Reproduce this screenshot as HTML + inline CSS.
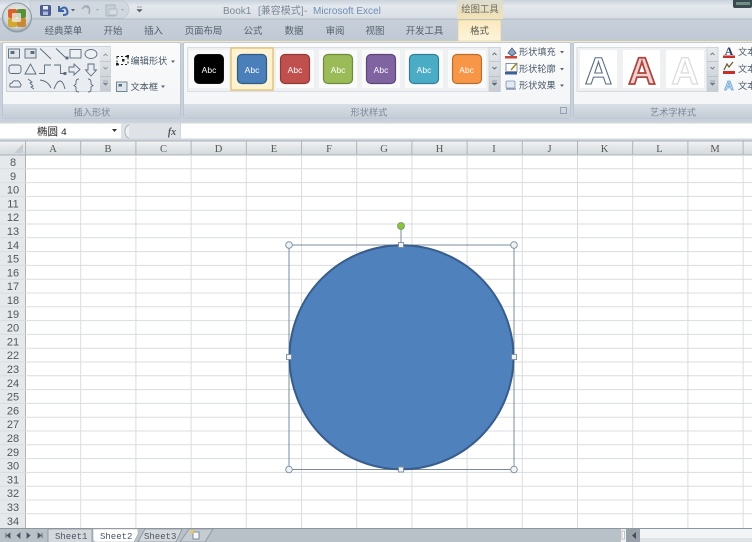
<!DOCTYPE html>
<html><head><meta charset="utf-8">
<style>
html,body{margin:0;padding:0;background:#fff;width:752px;height:542px;overflow:hidden}
svg{display:block;filter:blur(.3px)}
text{font-family:"Liberation Sans","Noto Sans CJK SC",sans-serif;font-size:9.2px;fill:#4a5868}
.m{font-family:"Liberation Mono","Noto Sans CJK SC",monospace}
.h{font-family:"Liberation Serif",serif;font-size:10.5px;fill:#555;text-anchor:middle}
.r{font-family:"Liberation Sans",sans-serif;font-size:11px;fill:#555;text-anchor:middle}
.t{font-size:9.4px;fill:#55606e;text-anchor:middle}
.g{font-size:9.2px;fill:#7b8796;text-anchor:middle}
.b{font-size:8.5px;fill:#fff;text-anchor:middle}
.i{fill:none;stroke:#5b6a7c;stroke-width:.9}
</style></head><body>
<svg width="752" height="542" viewBox="0 0 752 542" xmlns="http://www.w3.org/2000/svg">
<defs>
<linearGradient id="tb" x1="0" y1="0" x2="0" y2="1"><stop offset="0" stop-color="#c9d1da"/><stop offset=".3" stop-color="#e4e8ed"/><stop offset="1" stop-color="#d8dee5"/></linearGradient>
<linearGradient id="tr" x1="0" y1="0" x2="0" y2="1"><stop offset="0" stop-color="#c8d0da"/><stop offset="1" stop-color="#bfc9d4"/></linearGradient>
<linearGradient id="rb" x1="0" y1="0" x2="0" y2="1"><stop offset="0" stop-color="#fbfbfb"/><stop offset="1" stop-color="#f2f4f6"/></linearGradient>
<linearGradient id="ft" x1="0" y1="0" x2="0" y2="1"><stop offset="0" stop-color="#d9dfe6"/><stop offset="1" stop-color="#c4ccd6"/></linearGradient>
<linearGradient id="ct" x1="0" y1="0" x2="0" y2="1"><stop offset="0" stop-color="#dcdcd0"/><stop offset="1" stop-color="#f2e3b4"/></linearGradient>
<linearGradient id="at" x1="0" y1="0" x2="0" y2="1"><stop offset="0" stop-color="#fbe9bd"/><stop offset="1" stop-color="#fdf4dc"/></linearGradient>
<linearGradient id="hd" x1="0" y1="0" x2="0" y2="1"><stop offset="0" stop-color="#f1f3f4"/><stop offset="1" stop-color="#d3d8dc"/></linearGradient>
<linearGradient id="sc" x1="0" y1="0" x2="0" y2="1"><stop offset="0" stop-color="#e8ebee"/><stop offset="1" stop-color="#c6ccd2"/></linearGradient>
<radialGradient id="ob" cx=".5" cy=".4" r=".6"><stop offset="0" stop-color="#f4f2ea"/><stop offset=".75" stop-color="#cfd5d8"/><stop offset="1" stop-color="#8d9aa5"/></radialGradient>
</defs>

<!-- title bar -->
<rect width="752" height="19" fill="url(#tb)"/>
<rect y="19" width="752" height="22" fill="url(#tr)"/>
<rect y="18.5" width="752" height="1" fill="#aeb9c5"/>
<path d="M30 1H124Q134 9 124 18H30Z" fill="#d1d8e0" stroke="#bcc5cf" stroke-width=".7"/>
<rect x="733" y="-3" width="19" height="11" rx="2" fill="#3a4a50"/><rect x="736" y="2" width="14" height="3" fill="#6f8f80"/>

<!-- office button -->
<circle cx="17" cy="17.500" r="14.500" fill="url(#ob)" stroke="#8b97a2"/>
<rect x="8" y="9" width="9" height="9" rx="2" fill="#d8622c"/><rect x="17" y="9" width="9" height="9" rx="2" fill="#5b8f3a"/>
<rect x="8" y="18" width="9" height="9" rx="2" fill="#d2a92e"/><rect x="17" y="18" width="9" height="9" rx="2" fill="#c98a35"/>
<rect x="12" y="13" width="9" height="9" rx="1" fill="#eef0ee" opacity=".75"/>

<!-- QAT -->
<rect x="40.500" y="5.500" width="10" height="10" rx="1" fill="#4c5f9a" stroke="#38487a" stroke-width=".8"/><rect x="43" y="6" width="5" height="3.500" fill="#e9edf5"/><rect x="43" y="11.500" width="5" height="3.500" fill="#aeb9d6"/>
<path d="M59 6V11H64" fill="none" stroke="#3e63a8" stroke-width="2"/><path d="M60 10Q65 5 67 10T63 15" fill="none" stroke="#3e63a8" stroke-width="2"/>
<path d="M71 9h4l-2 2.500z" fill="#53606e"/>
<path d="M85 6Q91 5 89 14M82 9l3-3 3 2" fill="none" stroke="#a2adb9" stroke-width="1.600"/>
<path d="M96 9h3l-1.500 2z" fill="#a4aeb9"/>
<rect x="106" y="5" width="9" height="11" fill="#c7cfd7" stroke="#a5afba" stroke-width=".8"/><path d="M109 9h8v6h-8z" fill="#d7dce1" stroke="#aab3bd" stroke-width=".7"/>
<path d="M121 9h3l-1.500 2z" fill="#a4aeb9"/>
<path d="M137 7h5M137 9.500h5l-2.500 2.500z" fill="#55606e" stroke="#55606e" stroke-width=".6"/>

<text x="223" y="14" style="font-size:10px;fill:#7b8896">Book1<tspan x="258">[兼容模式]</tspan><tspan x="304">-</tspan><tspan x="313" fill="#6f8fb5">Microsoft Excel</tspan></text>

<!-- tabs -->
<path d="M457 0H503V19H457Z" fill="url(#ct)"/>
<text x="480" y="12.500" class="t" style="fill:#6b6b5e">绘图工具</text>
<path d="M458 41V22Q458 20 460 20H499Q501 20 501 22V41Z" fill="url(#at)" stroke="#d9cfa8" stroke-width=".7"/>
<text x="63.500" y="34" class="t">经典菜单</text><text x="113" y="34" class="t">开始</text><text x="153.500" y="34" class="t">插入</text><text x="203.500" y="34" class="t">页面布局</text><text x="253" y="34" class="t">公式</text><text x="294" y="34" class="t">数据</text><text x="335" y="34" class="t">审阅</text><text x="375" y="34" class="t">视图</text><text x="424.500" y="34" class="t">开发工具</text><text x="479.500" y="34" class="t" style="fill:#5a5a50">格式</text>

<!-- ribbon -->
<rect y="41" width="752" height="82" fill="#c9d2dc"/>
<rect y="41" width="752" height="1.500" fill="#f3e7c6"/>
<g stroke="#b4bfca" stroke-width=".8">
<rect x="2.500" y="42.500" width="178" height="76" rx="2" fill="url(#rb)"/>
<rect x="183.500" y="42.500" width="387" height="76" rx="2" fill="url(#rb)"/>
<rect x="573.500" y="42.500" width="180" height="76" rx="2" fill="url(#rb)"/>
</g>
<path d="M3 104H180V116Q180 118 178 118H5Q3 118 3 116Z" fill="url(#ft)"/>
<path d="M184 104H570V116Q570 118 568 118H186Q184 118 184 116Z" fill="url(#ft)"/>
<path d="M574 104H752V118H576Q574 118 574 116Z" fill="url(#ft)"/>
<text x="92" y="115.500" class="g">插入形状</text>
<text x="369" y="115.500" class="g">形状样式</text>
<text x="673" y="115.500" class="g">艺术字样式</text>
<rect x="560.500" y="107.500" width="6" height="6" fill="none" stroke="#8a96a3" stroke-width=".8"/>

<!-- shapes gallery -->
<rect x="6.500" y="46.500" width="104" height="45" fill="#e9edf1" stroke="#c2cad3" stroke-width=".8"/>
<rect x="100" y="47" width="10.500" height="44" fill="url(#sc)"/>
<path d="M100 61.500h10.500M100 76.500h10.500" stroke="#b5bec8" stroke-width=".7"/>
<path d="M103.500 56l2-2 2 2M103.500 67l2 2 2-2" fill="none" stroke="#7d8895" stroke-width=".8"/><path d="M103 81h5M103 83h5l-2.500 2.500z" fill="#7d8895" stroke="#7d8895" stroke-width=".5"/>
<g class="i">
<rect x="8.500" y="49" width="11" height="9" fill="#dfe4ea"/><path d="M11 51.500h3v2h-3z" fill="#5b6a7c"/>
<rect x="25" y="49" width="11" height="9" fill="#dfe4ea"/><path d="M31 51.500h3v2h-3z" fill="#5b6a7c"/>
<path d="M40 48.500L51 59M56 48.500L66 58"/><rect x="66" y="57" width="2" height="2" fill="#5b6a7c"/>
<rect x="70" y="49.500" width="11" height="8.500" fill="#eef1f4"/><ellipse cx="91" cy="54" rx="6" ry="4.500" fill="#eef1f4"/>
<rect x="9" y="65" width="12" height="8.500" rx="2.500"/><path d="M25 74L30.500 64 36 74Z"/>
<path d="M39 73.500h5.500V65H51M54 65h6.500V73.500H65"/><rect x="64" y="72.500" width="2" height="2" fill="#5b6a7c"/>
<path d="M69 67h5v-3l6 5.500-6 5.500v-3h-5z"/><path d="M88 64h6v6h2.500l-5.500 6-5.500-6H88z"/>
<path d="M10 87q-1-4 2-4 1-3 4-2 3-1 4 2 2 2 0 4z"/><path d="M28 79l4 3-2 1 3 3-2 1 3 2"/>
<path d="M40 80q8 1 11 8M54 89q3-8 6-8t5 8M79 79q-3 0-3 3v2l-2 1.500 2 1.500v3q0 2 3 2M88 79q3 0 3 3v2l2 1.500-2 1.500v3q0 2-3 2"/>
</g>
<!-- edit shape -->
<rect x="117" y="56.500" width="11" height="8" fill="none" stroke="#222" stroke-width="1" stroke-dasharray="2 2"/>
<rect x="116" y="63" width="2.500" height="2.500" fill="#222"/><rect x="126.500" y="55" width="2.500" height="2.500" fill="#222"/><rect x="122" y="59" width="2.500" height="2.500" fill="#222"/>
<text x="130.500" y="64">编辑形状</text><path d="M171 60.500h4l-2 2.500z" fill="#5b6673"/>
<rect x="116.500" y="82" width="10.500" height="9.500" fill="#dfe5ec" stroke="#6a7888" stroke-width=".9"/><path d="M118.500 84h3.500v2.500h-3.500z" fill="#5b6a7c"/>
<text x="130.500" y="90">文本框</text><path d="M161 85.500h4l-2 2.500z" fill="#5b6673"/>

<!-- shape styles -->
<rect x="187.500" y="47.500" width="313" height="44" fill="#eef0f2" stroke="#d4d9df" stroke-width=".8"/>
<g fill="#fafafa"><rect x="189" y="50" width="40" height="38"/><rect x="276" y="50" width="38" height="38"/><rect x="319" y="50" width="38" height="38"/><rect x="362" y="50" width="38" height="38"/><rect x="405" y="50" width="38" height="38"/><rect x="448" y="50" width="38" height="38"/></g>
<rect x="231" y="48" width="42" height="42" fill="#fdf3d2" stroke="#e2bd6b" stroke-width="1.300"/>
<rect x="194.500" y="54.500" width="29" height="29" rx="4.500" fill="#000" stroke="#111"/>
<rect x="237.500" y="54.500" width="29" height="29" rx="4.500" fill="#4b7fba" stroke="#2f5a86" stroke-width="1.200"/>
<rect x="280.500" y="54.500" width="29" height="29" rx="4.500" fill="#c0504d" stroke="#8f3a38" stroke-width="1.200"/>
<rect x="323.500" y="54.500" width="29" height="29" rx="4.500" fill="#9bbb59" stroke="#6f8a3d" stroke-width="1.200"/>
<rect x="366.500" y="54.500" width="29" height="29" rx="4.500" fill="#8064a2" stroke="#5c4678" stroke-width="1.200"/>
<rect x="409.500" y="54.500" width="29" height="29" rx="4.500" fill="#4bacc6" stroke="#317f94" stroke-width="1.200"/>
<rect x="452.500" y="54.500" width="29" height="29" rx="4.500" fill="#f79646" stroke="#b86e30" stroke-width="1.200"/>
<text x="209" y="73" class="b">Abc</text><text x="252" y="73" class="b">Abc</text><text x="295" y="73" class="b">Abc</text><text x="338" y="73" class="b">Abc</text><text x="381" y="73" class="b">Abc</text><text x="424" y="73" class="b">Abc</text><text x="466.500" y="73" class="b">Abc</text>
<rect x="489" y="47.500" width="11" height="44" fill="url(#sc)" stroke="#c2cad3" stroke-width=".6"/>
<path d="M489 61.500h11M489 76.500h11" stroke="#b5bec8" stroke-width=".7"/>
<path d="M492.500 55l2-2 2 2M492.500 67l2 2 2-2" fill="none" stroke="#5d6875" stroke-width=".9"/><path d="M492 81h5M492 83h5l-2.500 2.500z" fill="#5d6875" stroke="#5d6875" stroke-width=".5"/>

<path d="M508 53l4-5 4 5-4 3z" fill="#8ea4bd" stroke="#3f5a7c" stroke-width=".8"/><rect x="505" y="56" width="12" height="2.500" fill="#c9453e"/>
<rect x="506" y="63.500" width="11" height="8" fill="#fff" stroke="#6b7a8a" stroke-width=".8"/><path d="M511 70l6-7" stroke="#9a8b2f" stroke-width="1.600"/><rect x="505" y="72" width="12" height="2.500" fill="#3f5f9c"/>
<rect x="506" y="81" width="9" height="7" rx="1" fill="#e4e9ef" stroke="#7d93ad" stroke-width=".8"/><path d="M506 89h10" stroke="#7d93ad" stroke-width="1.400"/>
<text x="519" y="55">形状填充</text><text x="519" y="72">形状轮廓</text><text x="519" y="88.500">形状效果</text>
<path d="M560 51h4l-2 2.500zM560 68h4l-2 2.500zM560 84.500h4l-2 2.500z" fill="#5b6673"/>

<!-- wordart -->
<rect x="577" y="47.500" width="141" height="44" fill="#eef0f2" stroke="#cfd5db" stroke-width=".8"/>
<g fill="#fff"><rect x="580" y="50" width="37" height="38"/><rect x="623" y="50" width="37" height="38"/><rect x="666" y="50" width="38" height="38"/></g>
<text x="598.500" y="84" text-anchor="middle" style="font-size:38px;font-family:'Liberation Sans';font-weight:bold;fill:#fff;stroke:#5a6e82;stroke-width:1.100">A</text>
<text x="642" y="84" text-anchor="middle" style="font-size:38px;font-family:'Liberation Sans';font-weight:bold;fill:#ecd2d0;stroke:#b0443f;stroke-width:1.800">A</text>
<text x="685" y="84" text-anchor="middle" style="font-size:38px;font-family:'Liberation Sans';font-weight:bold;fill:#fff;stroke:#d8dadc;stroke-width:1.200">A</text>
<rect x="707" y="47.500" width="11" height="44" fill="url(#sc)" stroke="#c2cad3" stroke-width=".6"/>
<path d="M707 61.500h11M707 76.500h11" stroke="#b5bec8" stroke-width=".7"/>
<path d="M710.500 55l2-2 2 2M710.500 67l2 2 2-2" fill="none" stroke="#6d7885" stroke-width=".9"/><path d="M710 81h5M710 83h5l-2.500 2.500z" fill="#6d7885" stroke="#6d7885" stroke-width=".5"/>
<text x="729" y="55" text-anchor="middle" style="font-size:12px;font-weight:bold;font-family:'Liberation Serif';fill:#2a3a66">A</text><rect x="723" y="55.500" width="12" height="2.500" fill="#c9302c"/>
<path d="M724 70l3-6 2 3 4-5" fill="none" stroke="#6b5a30" stroke-width="1.200"/><rect x="723" y="71" width="12" height="3" fill="#c9302c"/>
<text x="729" y="90" text-anchor="middle" style="font-size:13px;font-weight:bold;font-family:'Liberation Sans';fill:#cfe2f3;stroke:#6ea4d2;stroke-width:.8">A</text>
<text x="738" y="55">文本</text><text x="738" y="72">文本</text><text x="738" y="89">文本</text>

<!-- formula bar -->
<rect y="122" width="752" height="20" fill="#d0d6dc"/>
<rect y="123.500" width="121" height="15" fill="#fff"/>
<rect x="121" y="123.500" width="59" height="15" fill="#dfe3e8"/>
<rect x="181" y="123.500" width="571" height="15" fill="#fff"/>
<text x="37" y="135" style="font-size:10.500px;fill:#222">椭圆 <tspan class="m" font-size="10">4</tspan></text>
<path d="M112 129h5l-2.500 3z" fill="#333"/>
<path d="M129 124.500a8 8 0 0 0 0 14" fill="#eef0f3" stroke="#a9b3bd"/>
<text x="172" y="135" text-anchor="middle" style="font-family:'Liberation Serif';font-style:italic;font-weight:bold;font-size:10px;fill:#555">fx</text>

<!-- sheet -->
<rect y="155" width="752" height="373" fill="#fff"/>
<rect y="141" width="752" height="14" fill="url(#hd)"/>
<rect y="155" width="25.500" height="373" fill="#e6e9ec"/>
<path d="M0 141h752M0 155h752" stroke="#9aa3ab" stroke-width=".8"/>
<path d="M25.500 141V528" stroke="#a6aeb6" stroke-width=".9"/>
<path d="M23 144v9h-9z" fill="#c6ccd2"/>
<g stroke="#d9dde0" stroke-width="1">
<path d="M0 168.800H752M0 182.600H752M0 196.400H752M0 210.200H752M0 224H752M0 237.800H752M0 251.600H752M0 265.400H752M0 279.200H752M0 293H752M0 306.800H752M0 320.600H752M0 334.400H752M0 348.200H752M0 362H752M0 375.800H752M0 389.600H752M0 403.400H752M0 417.200H752M0 431H752M0 444.800H752M0 458.600H752M0 472.400H752M0 486.200H752M0 500H752M0 513.800H752"/>
<path d="M80.700 155V528M135.900 155V528M191.100 155V528M246.300 155V528M301.500 155V528M356.700 155V528M411.900 155V528M467.100 155V528M522.300 155V528M577.500 155V528M632.700 155V528M687.900 155V528M743.100 155V528"/>
</g>
<path d="M80.700 141V155M135.900 141V155M191.100 141V155M246.300 141V155M301.500 141V155M356.700 141V155M411.900 141V155M467.100 141V155M522.300 141V155M577.500 141V155M632.700 141V155M687.900 141V155M743.100 141V155" stroke="#a8b0b7" stroke-width=".9"/>
<g>
<text class="h" x="53" y="152">A</text><text class="h" x="108" y="152">B</text><text class="h" x="163.500" y="152">C</text><text class="h" x="218.500" y="152">D</text><text class="h" x="274" y="152">E</text><text class="h" x="329" y="152">F</text><text class="h" x="384" y="152">G</text><text class="h" x="439.500" y="152">H</text><text class="h" x="494" y="152">I</text><text class="h" x="549.500" y="152">J</text><text class="h" x="604.500" y="152">K</text><text class="h" x="659.500" y="152">L</text><text class="h" x="715" y="152">M</text>
</g>
<g>
<text class="r" x="13" y="166">8</text><text class="r" x="13" y="180">9</text><text class="r" x="13" y="193.500">10</text><text class="r" x="13" y="207.500">11</text><text class="r" x="13" y="221">12</text><text class="r" x="13" y="235">13</text><text class="r" x="13" y="249">14</text><text class="r" x="13" y="262.500">15</text><text class="r" x="13" y="276.500">16</text><text class="r" x="13" y="290">17</text><text class="r" x="13" y="304">18</text><text class="r" x="13" y="318">19</text><text class="r" x="13" y="331.500">20</text><text class="r" x="13" y="345.500">21</text><text class="r" x="13" y="359">22</text><text class="r" x="13" y="373">23</text><text class="r" x="13" y="387">24</text><text class="r" x="13" y="400.500">25</text><text class="r" x="13" y="414.500">26</text><text class="r" x="13" y="428">27</text><text class="r" x="13" y="442">28</text><text class="r" x="13" y="456">29</text><text class="r" x="13" y="469.500">30</text><text class="r" x="13" y="483.500">31</text><text class="r" x="13" y="497">32</text><text class="r" x="13" y="511">33</text><text class="r" x="13" y="525">34</text>
</g>

<!-- circle -->
<rect x="289" y="245" width="225" height="224.500" fill="none" stroke="#7b8c98" stroke-width="1"/>
<circle cx="401.500" cy="357.300" r="112" fill="#4f81bd" stroke="#385d8a" stroke-width="2"/>
<path d="M401 229V244" stroke="#7b8c98" stroke-width="1"/>
<circle cx="401" cy="226" r="3.500" fill="#8ac43f" stroke="#6f8f60" stroke-width=".8"/>
<g fill="#eef3f7" stroke="#7b8c98" stroke-width=".9">
<circle cx="289" cy="245" r="3.300"/><circle cx="514" cy="245" r="3.300"/><circle cx="289" cy="469.500" r="3.300"/><circle cx="514" cy="469.500" r="3.300"/>
<rect x="398.500" y="242.500" width="5" height="5"/><rect x="286.500" y="354.500" width="5" height="5"/><rect x="511.500" y="354.500" width="5" height="5"/><rect x="398.500" y="467" width="5" height="5"/>
</g>

<!-- bottom -->
<rect y="528" width="752" height="14" fill="#b9c1c8"/>
<path d="M0 528.500H752" stroke="#8e979f" stroke-width="1"/>
<path d="M6 533v5M10 533l-3 2.500 3 2.500zM20 533l-3 2.500 3 2.500zM27 533l3 2.500-3 2.500zM38 533l3 2.500-3 2.500zM42 533v5" fill="#4a5560" stroke="#4a5560" stroke-width=".8"/>
<path d="M48 542V529H92V542" fill="#d3d8dd" stroke="#8a939b" stroke-width=".8"/>
<path d="M138 542L145 529H182L176 542Z" fill="#d3d8dd" stroke="#8a939b" stroke-width=".8"/>
<path d="M93 529H138V534L134 542H96Q93 542 93 539Z" fill="#fff" stroke="#a4acb3" stroke-width=".6"/>
<path d="M180 542L189 529H213L205 542Z" fill="#c5ccd2" stroke="#8a939b" stroke-width=".8"/>
<text class="m" x="55" y="539" style="font-size:9px;fill:#4d5560">Sheet1</text>
<text class="m" x="100" y="539" style="font-size:9px;fill:#4d5560">Sheet2</text>
<text class="m" x="144" y="539" style="font-size:9px;fill:#4d5560">Sheet3</text>
<rect x="193" y="532" width="6" height="7" fill="#f4f6f8" stroke="#66788a" stroke-width=".8"/><circle cx="192" cy="531.500" r="1.800" fill="#edc95c"/>
<rect x="621" y="529" width="5" height="13" fill="#eef0f2"/><rect x="622" y="531" width="2.500" height="8" fill="#fff" stroke="#8a939b" stroke-width=".5"/>
<rect x="626" y="529" width="14" height="13" fill="#98a1a9"/>
<path d="M636 532v7l-4-3.500z" fill="#454e57"/>
<rect x="640" y="529" width="112" height="13" fill="#f2f4f5"/>
<rect x="640" y="538" width="112" height="4" fill="#dfe3e6"/>
</svg>
</body></html>
